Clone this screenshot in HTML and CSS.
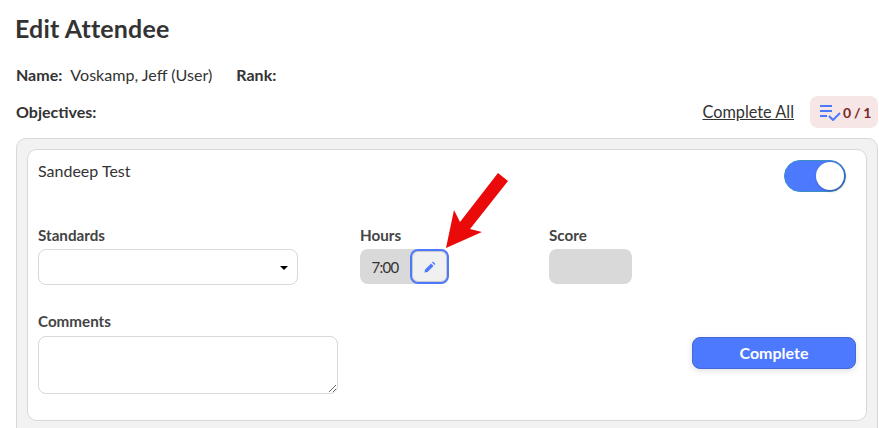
FILE: index.html
```html
<!DOCTYPE html>
<html lang="en">

<head>
    <meta charset="UTF-8">
    <meta name="viewport" content="width=device-width, initial-scale=1.0">
    <title>Edit Attendee</title>

    <link rel="stylesheet" href="styles.css">
</head>

<body>
    <h1 class="title">Edit Attendee</h1>

    <div class="attendee">
        <b>Name:</b>
        <span class="attendee-name">Voskamp, Jeff (User)</span>
        <b>Rank:</b>
    </div>

    <div class="objectives-head">
        <b>Objectives:</b>
        <a class="complete-all" href="#">Complete All</a>
        <div class="counter">
            <svg width="22" height="18" viewBox="0 0 22 18">
                <path d="M0 3h12M0 8h12M0 13h7" stroke="#4d79ff" stroke-width="2.2" fill="none" />
                <path d="M9 13l4 4 7-7" stroke="#4d79ff" stroke-width="2" fill="none" />
            </svg>
            <span>0 / 1</span>
        </div>
    </div>

    <div class="panel">
        <div class="card">
            <div class="card-top">
                <span>Sandeep Test</span>
                <div class="toggle"><div class="knob"></div></div>
            </div>

            <div class="fields">
                <div class="field standards">
                    <label>Standards</label>
                    <div class="select"><i class="caret"></i></div>
                </div>
                <div class="field hours">
                    <label>Hours</label>
                    <div class="hours-box">
                        <span>7:00</span>
                        <button class="edit-btn" type="button">
                            <svg width="12" height="12" viewBox="0 0 12 12">
                                <path d="M0.5 11.5l0.6-3 6-6 2.4 2.4-6 6z" fill="#4d79ff" />
                                <path d="M8 1.6l1-1 2.4 2.4-1 1z" fill="#4d79ff" />
                            </svg>
                        </button>
                    </div>
                </div>
                <div class="field score">
                    <label>Score</label>
                    <div class="score-box"></div>
                </div>
            </div>

            <div class="bottom">
                <div class="field">
                    <label>Comments</label>
                    <textarea class="comments"></textarea>
                </div>
                <button class="complete-btn" type="button">Complete</button>
            </div>
        </div>
    </div>

    <!-- red annotation arrow on top of the screenshot -->
    <svg class="arrow" width="879" height="428" viewBox="0 0 879 428">
        <path d="M498 173L508 181L470 229L482 232L446 248L454 210L460 222Z" fill="#ea0a0a" />
    </svg>
</body>

</html>
```

FILE: styles.css
```css
html,
body {
    height: 428px;
    overflow: hidden;
}

body {
    font-family: 'Lato', sans-serif;
    font-size: 16px;
    color: #333;
    background-color: #fff;
    margin: 0;
    padding: 0 1px 0 16px;
    box-sizing: border-box;
}

b,
label {
    font-weight: 700;
}

.title {
    font-size: 25px;
    font-weight: 700;
    letter-spacing: 0.15px;
    line-height: 30px;
    margin: 0 0 0 -1px;
    padding-top: 13px;
}

.attendee {
    display: flex;
    align-items: center;
    height: 20px;
    margin-top: 21px;
}

.attendee-name {
    margin: 0 24px 0 8px;
    font-size: 16.1px;
}

.objectives-head {
    display: flex;
    align-items: center;
    height: 32px;
    margin-top: 12px;
}

.objectives-head b {
    margin-bottom: 1px;
}

.complete-all {
    margin-left: auto;
    margin-bottom: 2px;
    color: #333;
    font-size: 16.3px;
}

.counter {
    display: flex;
    align-items: center;
    gap: 1px;
    width: 68px;
    height: 32px;
    box-sizing: border-box;
    margin-left: 16px;
    padding-left: 10px;
    background-color: #f6e6e6;
    border-radius: 8px;
    color: #7a2a2a;
    font-size: 14px;
    font-weight: 700;
    letter-spacing: -0.3px;
}

.panel {
    margin-top: 10px;
    padding: 10px;
    height: 300px;
    box-sizing: border-box;
    background-color: #f2f2f2;
    border: 1px solid #d9d9d9;
    border-radius: 10px;
}

.card {
    height: 272px;
    box-sizing: border-box;
    padding: 10px 10px 0;
    background-color: #fff;
    border: 1px solid #d9d9d9;
    border-radius: 10px;
}

.card-top {
    display: flex;
    justify-content: space-between;
    align-items: flex-start;
    height: 32px;
    padding-right: 10px;
    line-height: 21px;
}

.toggle {
    width: 62px;
    height: 32px;
    box-sizing: border-box;
    padding: 1px;
    display: flex;
    justify-content: flex-end;
    background-color: #4d79ff;
    border: 1px solid #3d8fc4;
    border-radius: 16px;
}

.knob {
    width: 28px;
    height: 28px;
    background-color: #fff;
    border-radius: 50%;
    box-shadow: 1px 1px 3px rgba(0, 0, 0, 0.35);
}

.fields {
    display: flex;
    margin-top: 34px;
}

.field label {
    display: block;
    line-height: 18px;
    font-size: 15.2px;
    color: #444;
    margin-bottom: 5px;
}

.standards {
    width: 322px;
}

.hours {
    width: 189px;
}

.select {
    display: flex;
    align-items: center;
    justify-content: flex-end;
    width: 260px;
    height: 36px;
    box-sizing: border-box;
    padding-right: 9px;
    border: 1px solid #d9d9d9;
    border-radius: 8px;
}

.caret {
    border-top: 4px solid #000;
    border-left: 4px solid transparent;
    border-right: 4px solid transparent;
    margin-top: 2px;
}

.hours-box {
    display: flex;
    align-items: center;
    width: 89px;
    height: 35px;
    background-color: #d9d9d9;
    border-radius: 8px;
}

.hours-box span {
    width: 50px;
    font-size: 15px;
    letter-spacing: -0.7px;
    text-align: center;
}

.edit-btn {
    display: flex;
    align-items: center;
    justify-content: center;
    width: 39px;
    height: 35px;
    padding: 0;
    background-color: #f0f0f0;
    border: 2px solid #4d79ff;
    border-radius: 8px;
    box-shadow: 0 0 0 1px #c9c9c9 inset;
}

.score-box {
    width: 83px;
    height: 35px;
    background-color: #d9d9d9;
    border-radius: 8px;
}

.bottom {
    display: flex;
    justify-content: space-between;
    align-items: flex-start;
    margin-top: 27px;
}

.bottom label {
    margin-bottom: 6px;
}

.comments {
    display: block;
    width: 300px;
    height: 58px;
    box-sizing: border-box;
    border: 1px solid #d9d9d9;
    border-radius: 8px;
    outline: none;
}

.complete-btn {
    width: 164px;
    height: 32px;
    margin-top: 25px;
    padding: 0 0 2px;
    color: #fff;
    font-family: 'Lato', sans-serif;
    font-size: 16px;
    font-weight: 700;
    background-color: #4d79ff;
    border: 1px solid #4568d8;
    border-radius: 8px;
    box-shadow: 0 2px 6px rgba(0, 0, 0, 0.12);
}

.arrow {
    position: absolute;
    left: 0;
    top: 0;
    pointer-events: none;
}
```
